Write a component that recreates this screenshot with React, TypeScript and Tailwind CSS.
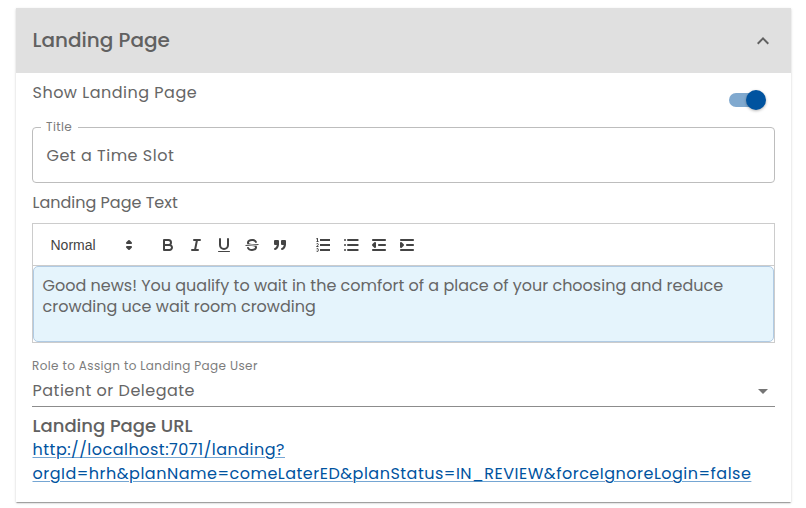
import type { ReactNode } from "react";

function Tool({ children }: { children: ReactNode }) {
  return (
    <button className="flex h-6 w-7 items-center justify-center">
      <svg
        viewBox="0 0 18 18"
        className="size-[18px]"
        fill="none"
        stroke="#444"
        strokeWidth="2"
        strokeLinecap="butt"
        strokeLinejoin="round"
      >
        {children}
      </svg>
    </button>
  );
}

export default function App() {
  return (
    <div className="h-[508px] w-[806px] overflow-hidden bg-white pl-4 pt-2 font-['Poppins','Inter',sans-serif] text-[#666]">
      <section className="h-[494px] w-[775px] bg-white shadow-[0_2px_1px_-1px_rgba(0,0,0,0.2),0_1px_1px_0_rgba(0,0,0,0.14),0_1px_3px_0_rgba(0,0,0,0.12)]">
        <header className="flex h-[65px] items-center justify-between bg-[#e0e0e0] px-4">
          <h2 className="mb-[2px] pl-[0.5px] text-[20px] font-medium leading-8 text-[#616161]">Landing Page</h2>
          <svg viewBox="0 0 24 24" className="size-6" fill="#616161">
            <path d="M12 8l-6 6 1.41 1.41L12 10.83l4.59 4.58L18 14z" />
          </svg>
        </header>
        <div className="px-4">
          <div className="flex h-[47px] justify-between pt-2">
            <span className="pl-[0.5px] text-[16px] leading-6 tracking-[0.5px]">Show Landing Page</span>
            <div className="mr-[9px] mt-[9px] flex h-5 w-[37px] items-center">
              <div className="h-[14px] w-[34px] rounded-full bg-[#80a9cf]" />
              <div className="-ml-[17px] size-5 shrink-0 rounded-full bg-[#00539f] shadow-[0_1px_3px_rgba(0,0,0,0.3)]" />
            </div>
          </div>
          <fieldset className="h-[63px] rounded border border-[#bdbdbd] pl-2">
            <legend className="pl-[5px] pr-[6px] text-[12px] leading-[14px] tracking-[0.4px] text-[#7c7c7c]">Title</legend>
            <div className="pl-[5.5px] pt-[10px] text-[16px] leading-6 tracking-[0.5px]">Get a Time Slot</div>
          </fieldset>
          <div className="mt-2 pl-[0.5px] text-[16px] leading-6">Landing Page Text</div>
          <div className="mt-[8px] flex h-[42px] items-center border border-b-0 border-[#ccc] pl-[17.5px]">
            <div className="flex w-[103.5px] items-center justify-between pr-[16px] font-['Liberation_Sans',Arial,sans-serif] text-[14px] font-medium text-[#444]">
              <span className="pt-[2px]">Normal</span>
              <svg viewBox="0 0 18 18" className="size-[18px]" fill="none" stroke="#444" strokeWidth="2" strokeLinejoin="round">
                <path d="M7 11l2 2 2-2zM7 7l2-2 2 2z" />
              </svg>
            </div>
            <div className="flex">
              <Tool>
                <path d="M5,4H9.5A2.5,2.5,0,0,1,12,6.5v0A2.5,2.5,0,0,1,9.5,9H5ZM5,9h5.5A2.5,2.5,0,0,1,13,11.5v0A2.5,2.5,0,0,1,10.5,14H5Z" />
              </Tool>
              <Tool>
                <path d="M7 4h6M5 14h6M8 14L10 4" strokeLinecap="round" />
              </Tool>
              <Tool>
                <path d="M5,3V9a4.012,4.012,0,0,0,4,4H9a4.012,4.012,0,0,0,4-4V3" strokeLinecap="round" />
                <rect x="3" y="15" width="12" height="1" rx=".5" fill="#444" stroke="none" />
              </Tool>
              <Tool>
                <path d="M15.5 8.5l-13 1" strokeWidth="1" />
                <path
                  fill="#444"
                  stroke="none"
                  d="M9.007,8C6.542,7.791,6,7.519,6,6.5,6,5.792,7.283,5,9,5c1.571,0,2.765.679,2.969,1.309a1,1,0,0,0,1.9-.617C13.356,4.106,11.354,3,9,3,6.2,3,4,4.538,4,6.5a3.2,3.2,0,0,0,.5,1.843ZM8.984,10C11.457,10.208,12,10.479,12,11.5c0,.708-1.283,1.5-3,1.5-1.571,0-2.765-.679-2.969-1.309a1,1,0,1,0-1.9.617C4.644,13.894,6.646,15,9,15c2.8,0,5-1.538,5-3.5a3.2,3.2,0,0,0-.5-1.843Z"
                />
              </Tool>
              <Tool>
                <rect x="4" y="5" width="3" height="3" fill="#444" />
                <rect x="11" y="5" width="3" height="3" fill="#444" />
                <path d="M7,8c0,4.031-3,5-3,5M14,8c0,4.031-3,5-3,5" fill="#444" strokeLinecap="round" />
              </Tool>
            </div>
            <div className="ml-[15px] flex">
              <Tool>
                <path d="M6 4h10M6 9h10M6 14h10" />
                <path
                  strokeWidth="1"
                  d="M2.5,5.5h2M4.5,10.5h-2c0-.234,1.85-1.076,1.85-2.234A0.959,0.959,0,0,0,2.5,8.156M2.5,14.846a0.959,0.959,0,0,0,1.85-.109A0.7,0.7,0,0,0,3.75,14a0.688,0.688,0,0,0,.6-0.736,0.959,0.959,0,0,0-1.85-.109"
                />
                <path
                  fill="#444"
                  stroke="none"
                  d="M3.5,6A0.5,0.5,0,0,1,3,5.5V3.085l-0.276.138A0.5,0.5,0,0,1,2.053,3c-0.124-.247-0.023-0.324.224-0.447l1-.5A0.5,0.5,0,0,1,4,2.5v3A0.5,0.5,0,0,1,3.5,6Z"
                />
              </Tool>
              <Tool>
                <path d="M6 4h9.7M6 9h9.7M6 14h9.7M3 4h0M3 9h0M3 14h0" strokeLinecap="round" />
              </Tool>
              <Tool>
                <path d="M2.2 14h13.6M2.2 4h13.6M8.2 9h7.6M5 7v4L3 9z" />
              </Tool>
              <Tool>
                <path d="M2.2 14h13.6M2.2 4h13.6M8.2 9h7.6M3 7v4l2-2z" fill="#444" />
              </Tool>
            </div>
          </div>
          <div className="h-[78px] border border-[#ccc]">
            <div className="h-full rounded-[5px] border border-[#b0cbe4] bg-[#e5f4fc] pl-[8.5px] pt-[8px] text-[16px] leading-[21px]">
              <div>Good news! You qualify to wait in the comfort of a place of your choosing and reduce</div>
              <div>crowding uce wait room crowding</div>
            </div>
          </div>
          <div className="mt-[14px] text-[12px] leading-[18px] tracking-[0.37px] text-[#7c7c7c]">Role to Assign to Landing Page User</div>
          <div className="flex h-[32px] justify-between border-b border-[#8c8c8c] pt-[4px]">
            <span className="pl-[0.5px] text-[16px] leading-6 tracking-[0.5px]">Patient or Delegate</span>
            <svg viewBox="0 0 24 24" className="size-6" fill="#757575">
              <path d="M7 10l5 5 5-5z" />
            </svg>
          </div>
          <h3 className="mt-[7px] pl-[0.5px] text-[18px] font-medium leading-6 text-[#616161]">Landing Page URL</h3>
          <a className="block pl-[0.5px] text-[16px] leading-6 tracking-[0.5px] text-[#00539f] underline decoration-[#75a6d3] decoration-1 underline-offset-[2px]">
            http://localhost:7071/landing?
            <br />
            orgId=hrh&amp;planName=comeLaterED&amp;planStatus=IN_REVIEW&amp;forceIgnoreLogin=false
          </a>
        </div>
      </section>
    </div>
  );
}
